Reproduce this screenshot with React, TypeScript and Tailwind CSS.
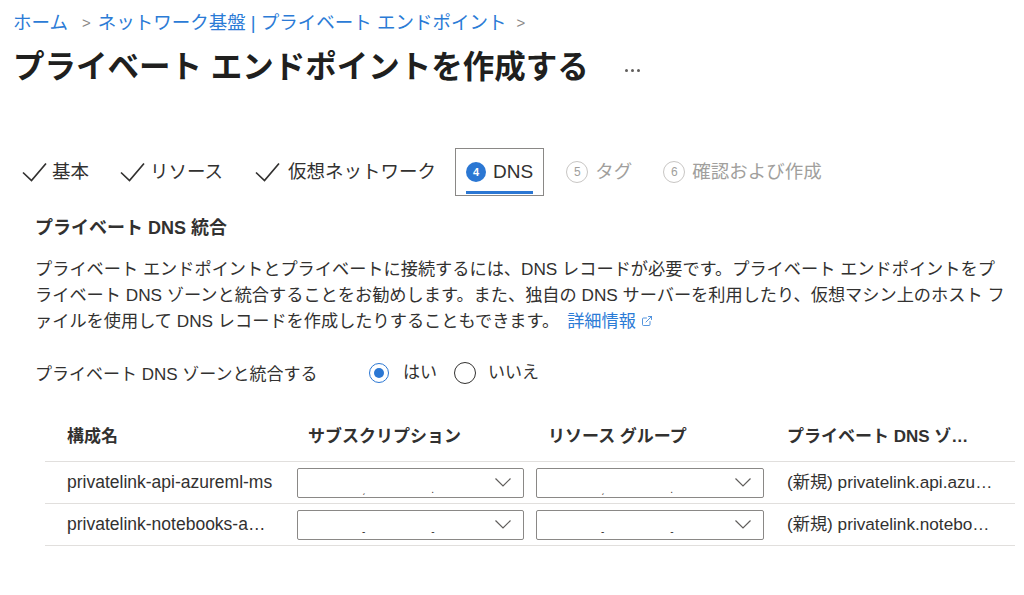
import React from "react";
import { ExternalLink } from "lucide-react";

const FONT = {
    fontFamily: '"Liberation Sans", "Noto Sans CJK JP", sans-serif',
};

function Check() {
    return (
        <svg width="25" height="20" viewBox="0 0 25 20" fill="none" className="shrink-0">
            <path d="M1 10.5 L9.5 18.5 L24 1.5" stroke="#323130" strokeWidth="1.7" />
        </svg>
    );
}

function Chevron() {
    return (
        <svg width="16" height="9" viewBox="0 0 16 9" fill="none" className="shrink-0">
            <path d="M0.5 0.5 L8 8 L15.5 0.5" stroke="#605e5c" strokeWidth="1.2" />
        </svg>
    );
}

function StepDot({ n, active }: { n: number; active?: boolean }) {
    if (active) {
        return (
            <span className="flex h-[20px] w-[20px] shrink-0 items-center justify-center rounded-full bg-[#2b77d3] text-[11px] font-bold text-white">
                {n}
            </span>
        );
    }
    return (
        <span className="flex h-[22px] w-[22px] shrink-0 items-center justify-center rounded-full border border-[#c8c6c4] text-[12px] text-[#a19f9d]">
            {n}
        </span>
    );
}

function Dropdown({ marks }: { marks: [string, string] }) {
    return (
        <div className="flex h-[30px] items-center justify-between rounded-[2px] border border-[#8a8886] pr-[12px]">
            <div className="flex h-full items-end pb-[1px] text-[10px] leading-[12px] text-[#323130]">
                <span className="pl-[64px]">{marks[0]}</span>
                <span className="pl-[66px]">{marks[1]}</span>
            </div>
            <Chevron />
        </div>
    );
}

const rows = [
    {
        name: "privatelink-api-azureml-ms",
        zone: "(新規) privatelink.api.azu…",
        marks: ["ˏ", "."] as [string, string],
    },
    {
        name: "privatelink-notebooks-a…",
        zone: "(新規) privatelink.notebo…",
        marks: ["-", "-"] as [string, string],
    },
];

export default function App() {
    return (
        <div
            className="h-[595px] w-[1024px] overflow-hidden bg-white text-[#323130]"
            style={FONT}
        >
            {/* Breadcrumb */}
            <div className="mt-[12px] flex h-[22px] items-center pl-[13px] text-[18.5px] text-[#2b7bd6]">
                <span>ホーム</span>
                <span className="pl-[14px] pr-[7px] text-[15px] text-[#8a8886]">&gt;</span>
                <span>ネットワーク基盤 | プライベート エンドポイント</span>
                <span className="px-[10px] text-[15px] text-[#8a8886]">&gt;</span>
            </div>

            {/* Title */}
            <div className="mt-[14px] flex h-[40px] items-center pl-[13px]">
                <h1 className="text-[31.5px] font-bold text-[#201f1e]">
                    プライベート エンドポイントを作成する
                </h1>
                <div className="ml-[36px] flex items-center gap-[3px] pt-[4px]">
                    <span className="h-[3px] w-[3px] rounded-full bg-[#605e5c]" />
                    <span className="h-[3px] w-[3px] rounded-full bg-[#605e5c]" />
                    <span className="h-[3px] w-[3px] rounded-full bg-[#605e5c]" />
                </div>
            </div>

            {/* Tabs */}
            <div className="mt-[60px] flex h-[48px] items-stretch pl-[11px] text-[18.5px]">
                <div className="flex items-center gap-[5px] px-[11px]">
                    <Check />
                    <span>基本</span>
                </div>
                <div className="ml-[9px] flex items-center gap-[5px] px-[11px]">
                    <Check />
                    <span>リソース</span>
                </div>
                <div className="ml-[10px] flex items-center gap-[8px] px-[11px]">
                    <Check />
                    <span>仮想ネットワーク</span>
                </div>
                <div className="relative ml-[8px] flex items-center gap-[7px] border-[1.5px] border-[#8a8886] px-[10px]">
                    <StepDot n={4} active />
                    <span className="text-[19px]">DNS</span>
                    <span className="absolute bottom-[1px] left-[10px] right-[10px] h-[3px] bg-[#2b77d3]" />
                </div>
                <div className="ml-[11px] flex items-center gap-[7px] px-[11px] text-[#a19f9d]">
                    <StepDot n={5} />
                    <span>タグ</span>
                </div>
                <div className="ml-[9px] flex items-center gap-[7px] px-[11px] text-[#a19f9d]">
                    <StepDot n={6} />
                    <span>確認および作成</span>
                </div>
            </div>

            {/* Section */}
            <div className="pl-[35px]">
                <h2 className="mt-[20px] flex h-[24px] items-center text-[18px] font-bold">
                    プライベート DNS 統合
                </h2>
                <p className="mt-[16px] whitespace-nowrap text-[17.2px] leading-[26px]">
                    プライベート エンドポイントとプライベートに接続するには、DNS レコードが必要です。プライベート エンドポイントをプ
                    <br />
                    ライベート DNS ゾーンと統合することをお勧めします。また、独自の DNS サーバーを利用したり、仮想マシン上のホスト フ
                    <br />
                    ァイルを使用して DNS レコードを作成したりすることもできます。
                    <a className="ml-[8px] inline-flex items-center gap-[5px] text-[#2b7bd6]">
                        詳細情報
                        <ExternalLink size={12} strokeWidth={1.6} />
                    </a>
                </p>

                <div className="mt-[24px] flex h-[30px] items-center text-[17px]">
                    <span className="w-[334px] pt-[4px]">プライベート DNS ゾーンと統合する</span>
                    <span className="flex h-[20px] w-[20px] items-center justify-center rounded-full border-[1.5px] border-[#2b77d3]">
                        <span className="h-[10px] w-[10px] rounded-full bg-[#2b77d3]" />
                    </span>
                    <span className="ml-[14px]">はい</span>
                    <span className="ml-[17px] h-[22px] w-[22px] rounded-full border-[1.5px] border-[#323130]" />
                    <span className="ml-[12px]">いいえ</span>
                </div>
            </div>

            {/* Table */}
            <div className="ml-[45px] mt-[25px] w-[970px]">
                <div className="grid h-[49px] grid-cols-[252px_239px_240px_1fr] items-center border-b border-[#e1dfdd] text-[17px] font-bold">
                    <span className="pl-[22px]">構成名</span>
                    <span className="pl-[11px]">サブスクリプション</span>
                    <span className="pl-[12px]">リソース グループ</span>
                    <span className="whitespace-nowrap pl-[11px]">プライベート DNS ゾ…</span>
                </div>
                {rows.map((r) => (
                    <div
                        key={r.name}
                        className="grid h-[42px] grid-cols-[252px_239px_240px_1fr] items-center border-b border-[#e1dfdd] text-[17.5px]"
                    >
                        <span className="whitespace-nowrap pl-[22px]">{r.name}</span>
                        <div className="w-[227px]">
                            <Dropdown marks={r.marks} />
                        </div>
                        <div className="w-[228px]">
                            <Dropdown marks={r.marks} />
                        </div>
                        <span className="whitespace-nowrap pl-[11px] text-[17.2px]">{r.zone}</span>
                    </div>
                ))}
            </div>
        </div>
    );
}
